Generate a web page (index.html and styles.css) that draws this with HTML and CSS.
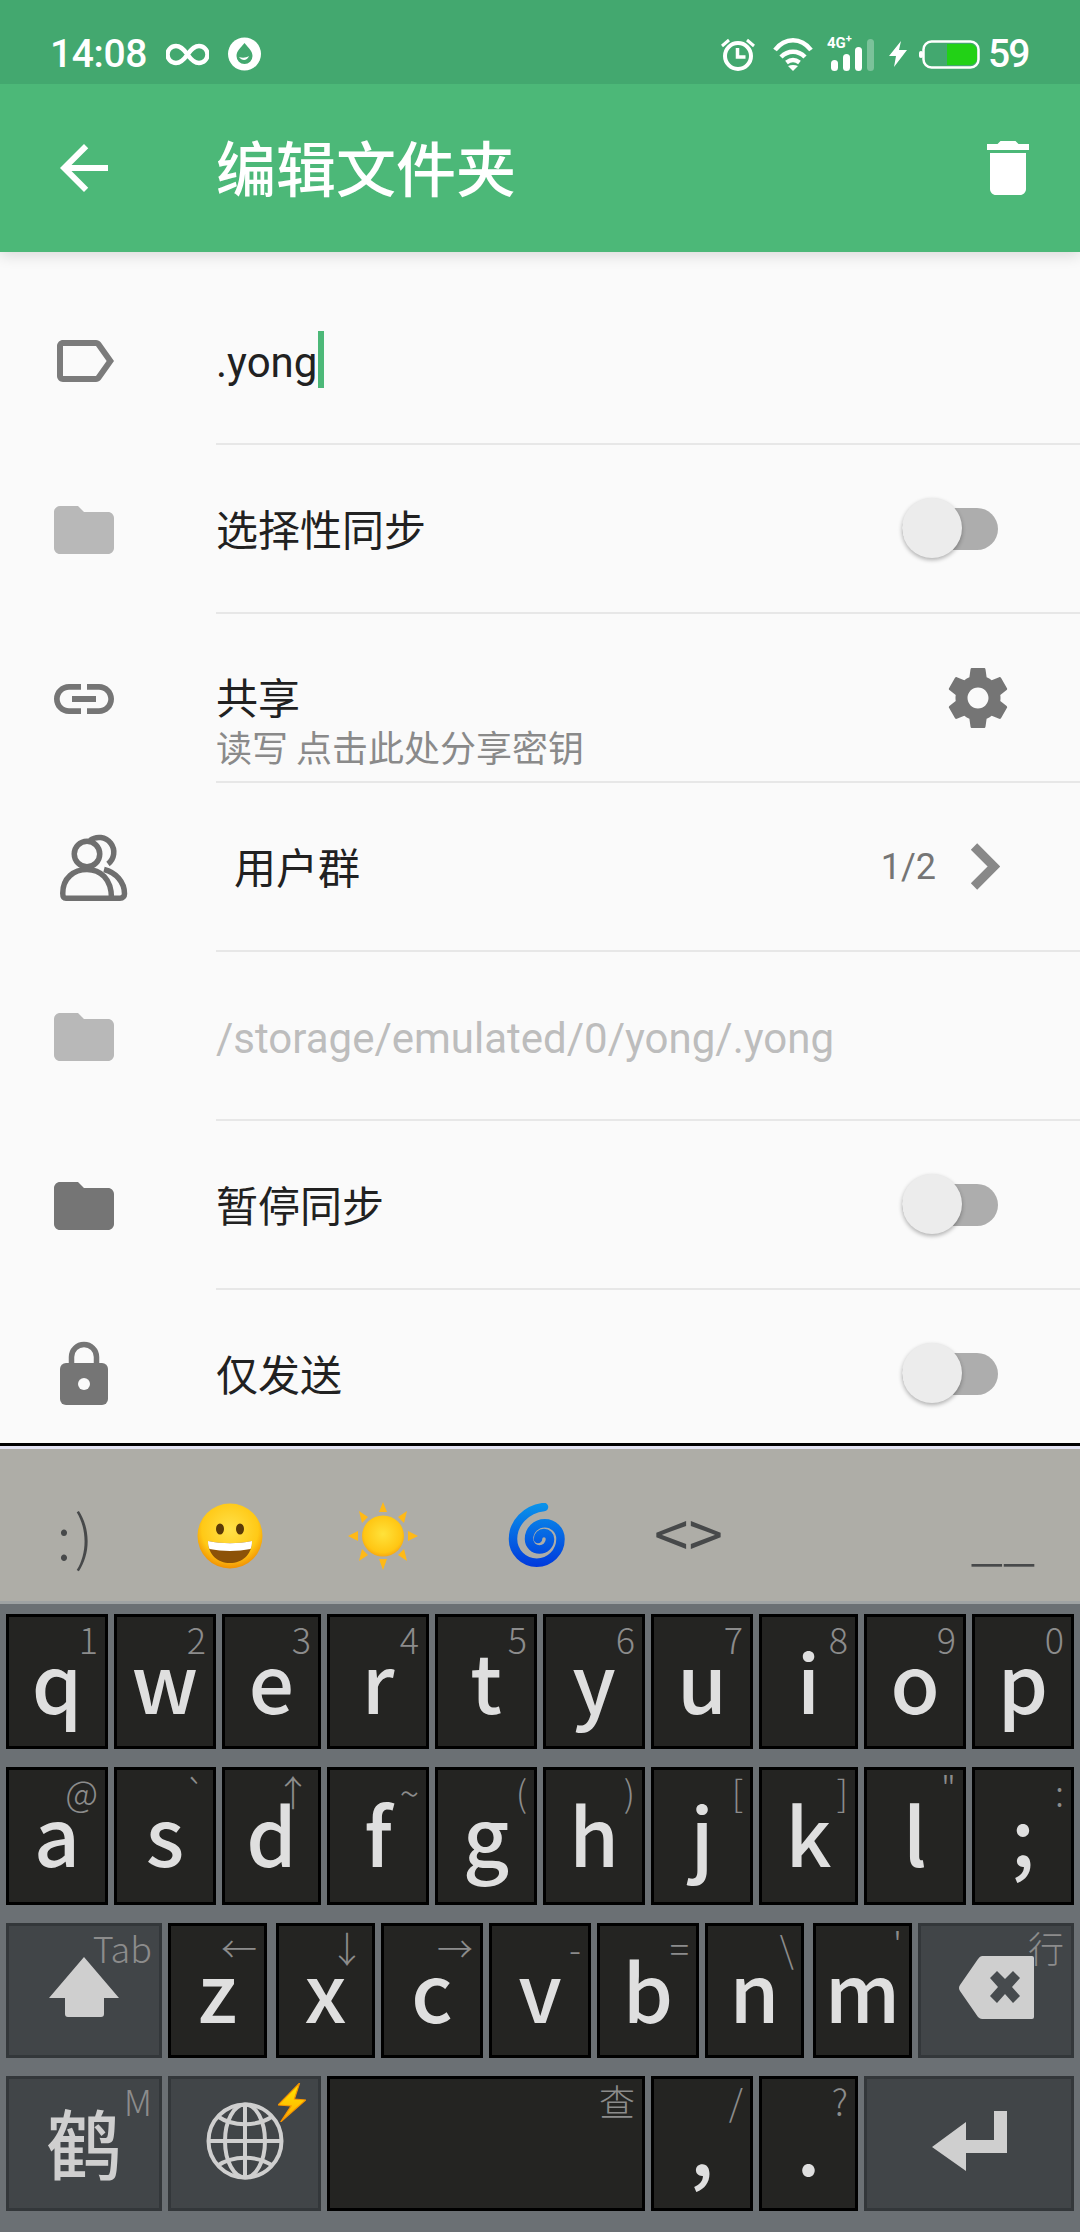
FILE: index.html
```html
<!DOCTYPE html>
<html lang="zh">
<head>
<meta charset="utf-8">
<title>编辑文件夹</title>
<link rel="stylesheet" href="styles.css">
</head>
<body>
<div class="screen">
  <header class="top">
    <div class="status">
      <span class="clock time">14:08</span>
      <svg class="s-inf" width="43" height="23" viewBox="0 0 43 23"><path d="M21.5 11.5C17 5 13 3 10 3a8.5 8.5 0 0 0 0 17c3 0 7-2 11.5-8.500C26 5 30 3 33 3a8.500 8.500 0 0 1 0 17c-3 0-7-2-11.500-8.500z" fill="none" stroke="#fff" stroke-width="4.500"/></svg>
      <svg class="s-ring" width="33" height="34" viewBox="0 0 33 34"><circle cx="16.500" cy="17" r="16.500" fill="#fff"/><path d="M16.500 6c4 5 8 8 8 13a8 8 0 0 1-16 0c0-5 4-8 8-13z" fill="#43a86f"/><path d="M11 20c3 4 8 4 10-1-3 2-7 2-10 1z" fill="#fff"/></svg>
      <div class="status-right">
        <svg width="34" height="34" viewBox="0 0 34 34"><circle cx="17" cy="19" r="13" fill="none" stroke="#fff" stroke-width="4"/><path d="M16.500 11v9h8" fill="none" stroke="#fff" stroke-width="3.500"/><path d="M1 9l7-6M33 9l-7-6" stroke="#fff" stroke-width="3"/></svg>
        <svg class="ml18" width="40" height="34" viewBox="0 0 40 34"><g fill="none" stroke="#fff" stroke-width="4.500"><path d="M2 13C12 0 28 0 38 13"/><path d="M8 20c7-7 17-7 24 0"/><path d="M13.500 25.500c4-3 9-3 13 0"/></g><path d="M15 29c3-1.500 7-1.500 10 0l-5 5z" fill="#fff"/></svg>
        <div class="net ml14">
          <span class="net-label">4G<sup>+</sup></span>
          <i class="bar b1"></i><i class="bar b2"></i><i class="bar b3"></i><i class="bar b4"></i>
        </div>
        <svg class="ml15" width="18" height="26" viewBox="0 0 18 26"><path d="M12 0L0 15h7L5 26 18 9h-8z" fill="#fff"/></svg>
        <svg class="ml12" width="61" height="29" viewBox="0 0 61 29"><rect x="0" y="11" width="4" height="7" rx="2" fill="#fff"/><rect x="4.500" y="1.500" width="55" height="26" rx="8" fill="none" stroke="#fff" stroke-width="2.500"/><path d="M28 4h23a7 7 0 0 1 7 7v7a7 7 0 0 1-7 7H28z" fill="#22d116"/></svg>
        <span class="clock level ml8">59</span>
      </div>
    </div>
    <div class="appbar">
      <svg class="ico" viewBox="0 0 24 24"><path d="M20 11H7.830l5.590-5.590L12 4l-8 8 8 8 1.410-1.410L7.830 13H20v-2z" fill="#fff"/></svg>
      <h1 class="title">编辑文件夹</h1>
      <svg class="ico trash" viewBox="0 0 24 24"><path d="M6 19c0 1.100.9 2 2 2h8c1.100 0 2-.9 2-2V7H6v12zM19 4h-3.500l-1-1h-5l-1 1H5v2h14V4z" fill="#fff"/></svg>
    </div>
  </header>

  <main class="list">
    <div class="row">
      <svg class="ico lead" viewBox="0 0 24 24"><path d="M17.630 5.840C17.270 5.330 16.670 5 16 5L5 5.010C3.900 5.010 3 5.900 3 7v10c0 1.100.9 1.990 2 1.990L16 19c.67 0 1.270-.33 1.630-.84L22 12l-4.370-6.160zM16 17H5V7h11l3.550 5L16 17z" fill="#7b7b7b"/></svg>
      <div class="cell"><span class="latin">.yong</span><i class="caret"></i></div>
    </div>
    <div class="row">
      <svg class="ico lead" viewBox="0 0 24 24"><path class="f-light" d="M10 4H4c-1.100 0-2 .9-2 2v12c0 1.100.9 2 2 2h16c1.100 0 2-.9 2-2V8c0-1.100-.9-2-2-2h-8l-2-2z"/></svg>
      <div class="cell"><span>选择性同步</span><div class="switch"><i class="thumb"></i></div></div>
    </div>
    <div class="row">
      <svg class="ico lead" viewBox="0 0 24 24"><path d="M3.900 12c0-1.710 1.390-3.100 3.100-3.100h4V7H7c-2.760 0-5 2.240-5 5s2.240 5 5 5h4v-1.900H7c-1.710 0-3.100-1.390-3.100-3.100zM8 13h8v-2H8v2zm9-6h-4v1.900h4c1.710 0 3.100 1.390 3.100 3.100s-1.390 3.100-3.100 3.100h-4V17h4c2.760 0 5-2.240 5-5s-2.240-5-5-5z" fill="#757575"/></svg>
      <div class="cell">
        <div class="stack"><span class="st-title">共享</span><span class="st-sub">读写 点击此处分享密钥</span></div>
        <svg class="ico gear" viewBox="0 0 24 24"><path d="M19.430 12.980c.04-.32.07-.64.07-.98s-.03-.66-.07-.98l2.110-1.650c.19-.15.24-.42.12-.64l-2-3.460c-.12-.22-.39-.3-.61-.22l-2.490 1c-.52-.4-1.080-.73-1.690-.98l-.38-2.650C14.460 2.180 14.250 2 14 2h-4c-.25 0-.46.18-.49.42l-.38 2.650c-.61.25-1.170.59-1.690.98l-2.490-1c-.23-.09-.49 0-.61.22l-2 3.460c-.13.22-.07.49.12.64l2.110 1.650c-.04.32-.07.65-.07.98s.03.66.07.98l-2.110 1.650c-.19.15-.24.42-.12.64l2 3.460c.12.22.39.3.61.22l2.490-1c.52.4 1.080.73 1.690.98l.38 2.650c.03.24.24.42.49.42h4c.25 0 .46-.18.49-.42l.38-2.650c.61-.25 1.170-.59 1.690-.98l2.490 1c.23.09.49 0 .61-.22l2-3.460c.12-.22.07-.49-.12-.64l-2.110-1.650zM12 15.500c-1.930 0-3.500-1.570-3.500-3.500s1.570-3.500 3.500-3.500 3.500 1.570 3.500 3.500-1.570 3.500-3.500 3.500z" fill="#757575"/></svg>
      </div>
    </div>
    <div class="row">
      <svg class="ico lead users" viewBox="0 0 72 72"><g fill="none" stroke="#6f6f6f" stroke-width="5.500"><circle cx="39" cy="22" r="12.750"/><path d="M42 8.500A14.500 14.500 0 0 1 60 32"/><path d="M18 66.250c-2.500 0-3.250-2-3.250-5C14.750 46 26 37.500 39 37.500s24.500 9 24.500 28.750"/><path d="M18 66.250h54c3 0 4.500-2 4.500-4.500C76.500 50 68 40.500 56 37.500"/></g></svg>
      <div class="cell"><span class="indent">用户群</span><span class="count">1/2</span><svg class="chev" width="30" height="47" viewBox="0 0 30 47"><path d="M4 3.500L24 23.500 4 43.500" fill="none" stroke="#888" stroke-width="9"/></svg></div>
    </div>
    <div class="row">
      <svg class="ico lead" viewBox="0 0 24 24"><path class="f-light" d="M10 4H4c-1.100 0-2 .9-2 2v12c0 1.100.9 2 2 2h16c1.100 0 2-.9 2-2V8c0-1.100-.9-2-2-2h-8l-2-2z"/></svg>
      <div class="cell"><span class="latin muted">/storage/emulated/0/yong/.yong</span></div>
    </div>
    <div class="row">
      <svg class="ico lead" viewBox="0 0 24 24"><path d="M10 4H4c-1.100 0-2 .9-2 2v12c0 1.100.9 2 2 2h16c1.100 0 2-.9 2-2V8c0-1.100-.9-2-2-2h-8l-2-2z" fill="#757575"/></svg>
      <div class="cell"><span>暂停同步</span><div class="switch"><i class="thumb"></i></div></div>
    </div>
    <div class="row">
      <svg class="ico lead" viewBox="0 0 72 72"><path d="M23.500 24v-6a12.500 12.500 0 0 1 25 0v6" fill="none" stroke="#757575" stroke-width="5.500"/><rect x="12" y="24" width="48" height="42" rx="6" fill="#757575"/><circle cx="36" cy="45" r="6" fill="#fafafa"/></svg>
      <div class="cell"><span>仅发送</span><div class="switch"><i class="thumb"></i></div></div>
    </div>
  </main>

  <section class="ime">
    <div class="cands">
      <span class="cand smile">:)</span>
      <span class="cand">
        <svg width="66" height="66" viewBox="0 0 66 66"><defs><radialGradient id="fc" cx=".5" cy=".4" r=".62"><stop offset="0" stop-color="#ffe14a"/><stop offset=".7" stop-color="#ffc916"/><stop offset="1" stop-color="#f08a00"/></radialGradient></defs><circle cx="33" cy="33" r="32.500" fill="url(#fc)"/><ellipse cx="23" cy="26" rx="4" ry="5.500" fill="#5b3a08"/><ellipse cx="43" cy="26" rx="4" ry="5.500" fill="#5b3a08"/><path d="M11 38c14 3 30 3 44 0 0 14-10 22-22 22S11 52 11 38z" fill="#8c5208"/><path d="M11 38c14 3 30 3 44 0 0 4-.5 6-1.500 8-13 2.500-28 2.500-41 0-1-2-1.500-4-1.500-8z" fill="#fff"/></svg>
      </span>
      <span class="cand">
        <svg width="70" height="68" viewBox="0 0 70 68"><defs><radialGradient id="sn" cx=".5" cy=".45" r=".6"><stop offset="0" stop-color="#ffe23a"/><stop offset=".75" stop-color="#ffc613"/><stop offset="1" stop-color="#f59a10"/></radialGradient></defs><g fill="#ffb917"><path d="M35 0l4 10h-8z"/><path d="M35 68l4-11h-8z"/><path d="M70 34l-10-5v10z"/><path d="M0 34l10-5v10z"/><path d="M59 9l-9 6 6 6z"/><path d="M11 9l9 6-6 6z"/><path d="M59 59l-9-6 6-6z"/><path d="M11 59l9-6-6-6z"/></g><ellipse cx="35" cy="34" rx="21" ry="20.500" fill="url(#sn)"/></svg>
      </span>
      <span class="cand">
        <svg width="60" height="66" viewBox="0 0 60 66"><defs><linearGradient id="cy" gradientUnits="userSpaceOnUse" x1="30" y1="0" x2="30" y2="66"><stop offset="0" stop-color="#0a94ea"/><stop offset="1" stop-color="#0036dc"/></linearGradient></defs><path d="M38 4C20 6 7 20 7 36A23.750 23.750 0 0 0 54.500 36A15.750 15.750 0 0 0 23 36A10.500 10.500 0 0 0 44 36A6 6 0 0 0 32 36" fill="none" stroke="url(#cy)" stroke-width="8.500" stroke-linecap="round"/></svg>
      </span>
      <span class="cand tag">&lt;&gt;</span>
      <span class="cand under">__</span>
    </div>
    <div class="cand-edge"></div>
    <div class="keys">
      <div class="krow">
        <div class="key w102"><span class="hint">1</span><span class="main">q</span></div>
        <div class="key w102"><span class="hint">2</span><span class="main">w</span></div>
        <div class="key w99"><span class="hint">3</span><span class="main">e</span></div>
        <div class="key w102"><span class="hint">4</span><span class="main">r</span></div>
        <div class="key w102"><span class="hint">5</span><span class="main">t</span></div>
        <div class="key w102"><span class="hint">6</span><span class="main">y</span></div>
        <div class="key w102"><span class="hint">7</span><span class="main">u</span></div>
        <div class="key w99"><span class="hint">8</span><span class="main">i</span></div>
        <div class="key w102"><span class="hint">9</span><span class="main">o</span></div>
        <div class="key w102"><span class="hint">0</span><span class="main">p</span></div>
      </div>
      <div class="krow tall">
        <div class="key w102"><span class="hint">@</span><span class="main">a</span></div>
        <div class="key w102"><span class="hint">`</span><span class="main">s</span></div>
        <div class="key w99"><span class="hint">↑</span><span class="main">d</span></div>
        <div class="key w102"><span class="hint">~</span><span class="main">f</span></div>
        <div class="key w102"><span class="hint">(</span><span class="main">g</span></div>
        <div class="key w102"><span class="hint">)</span><span class="main">h</span></div>
        <div class="key w102"><span class="hint">[</span><span class="main">j</span></div>
        <div class="key w99"><span class="hint">]</span><span class="main">k</span></div>
        <div class="key w102"><span class="hint">"</span><span class="main">l</span></div>
        <div class="key w102"><span class="hint">:</span><span class="main">;</span></div>
      </div>
      <div class="krow">
        <div class="key fn w156"><span class="hint">Tab</span>
          <svg class="glyph" width="70" height="61" viewBox="0 0 70 61"><path d="M35 0L70 41H55v16q0 3-3 3H19q-3 0-3-3V41H0z" fill="#cfcfcf"/></svg>
        </div>
        <div class="key w99"><span class="hint">←</span><span class="main">z</span></div>
        <div class="key w99 wide-gap"><span class="hint">↓</span><span class="main">x</span></div>
        <div class="key w102"><span class="hint">→</span><span class="main">c</span></div>
        <div class="key w102"><span class="hint">-</span><span class="main">v</span></div>
        <div class="key w102"><span class="hint">=</span><span class="main">b</span></div>
        <div class="key w99"><span class="hint">\</span><span class="main">n</span></div>
        <div class="key w99 wide-gap"><span class="hint">'</span><span class="main">m</span></div>
        <div class="key fn w156">
          <svg class="glyph" width="75" height="63" viewBox="0 0 75 63"><path d="M23 0h50q2 0 2 2v59q0 2-2 2H23q-2 0-4-2L1 35q-2-3 0-6L19 3q2-3 4-3z" fill="#cfcfcf"/><path d="M35 20l7-7 8 8 8-8 7 7-8 9 8 9-7 7-8-9-8 9-7-7 8-9z" fill="#474b4e" transform="translate(-4 2)"/></svg>
          <span class="hint">行</span>
        </div>
      </div>
      <div class="krow">
        <div class="key fn w156"><span class="hint">M</span><span class="he">鹤</span></div>
        <div class="key fn w153">
          <svg class="glyph" width="78" height="78" viewBox="0 0 78 78"><g fill="none" stroke="#cfcfcf" stroke-width="4"><circle cx="39" cy="39" r="36.500"/><ellipse cx="39" cy="39" rx="20" ry="36.500"/><path d="M39 2v74M2.500 39h73"/><path d="M11 14c16 11 40 11 56 0M11 64c16-11 40-11 56 0"/></g></svg>
          <svg class="bolt" width="28" height="39" viewBox="0 0 28 39"><defs><linearGradient id="bt" x1="0" y1="0" x2="0" y2="1"><stop offset="0" stop-color="#ffe900"/><stop offset="1" stop-color="#ffa800"/></linearGradient></defs><path d="M21.600 0L0 22l13 1L2.600 39 27.800 17l-11.400-1z" fill="url(#bt)" stroke="#f59300" stroke-width="1.200"/></svg>
        </div>
        <div class="key w318"><span class="hint">查</span></div>
        <div class="key w102"><span class="hint">/</span><span class="main">,</span></div>
        <div class="key w99"><span class="hint">?</span><span class="main">.</span></div>
        <div class="key fn w210">
          <svg class="glyph" width="75" height="60" viewBox="0 0 75 60"><path d="M62 0h13v42H34v18L0 36 34 11v18h28z" fill="#cfcfcf"/></svg>
        </div>
      </div>
    </div>
  </section>
</div>
</body>
</html>
```

FILE: styles.css
```css
* { box-sizing: border-box; }
html, body { margin: 0; padding: 0; }
body { font-family: "Noto Sans CJK SC", sans-serif; background: #fafafa; }
svg { display: block; flex: none; }
i { display: block; }

.screen { width: 1080px; height: 2232px; display: flex; flex-direction: column; overflow: hidden; }

.top { position: relative; z-index: 2; box-shadow: 0 3px 14px rgba(0,0,0,.14); flex: none; }
.status { height: 84px; padding: 24px 52px 0 50px; background: #43a86f; display: flex; align-items: center; color: #fff; }
.clock { font: 500 39px/1 Roboto, sans-serif; }
.time { letter-spacing: -.4px; }
.level { letter-spacing: -2px; width: 40px; }
.s-inf { margin-left: 19px; }
.s-ring { margin-left: 19px; }
.status-right { margin-left: auto; display: flex; align-items: center; }
.ml8 { margin-left: 8px; }
.ml12 { margin-left: 12px; }
.ml14 { margin-left: 14px; }
.ml15 { margin-left: 15px; }
.ml18 { margin-left: 18px; }
.net { width: 47px; height: 34px; position: relative; display: flex; align-items: flex-end; gap: 5px; padding-left: 4px; }
.net-label { position: absolute; left: 0; top: -1px; font: 700 15px/15px Roboto, sans-serif; color: #fff; }
.net-label sup { font-size: 11px; line-height: 0; }
.bar { width: 7px; background: #fff; border-radius: 4px; }
.b1 { height: 11px; }
.b2 { height: 17px; }
.b3 { height: 24px; }
.b4 { height: 32px; opacity: .3; }

.appbar { height: 168px; background: #4cb878; padding: 0 36px 0 48px; display: flex; align-items: center; }
.ico { width: 72px; height: 72px; }
.title { margin: 0 0 4px 96px; font-size: 60px; line-height: 1; font-weight: 500; color: #fff; }
.trash { margin-left: auto; }

.list { flex: 1; min-height: 0; overflow: hidden; padding-top: 24px; background: #fafafa; }
.row { height: 169px; display: flex; align-items: center; padding-left: 48px; font-size: 42px; color: #212121; }
.lead { margin-right: 96px; }
.users { overflow: visible; }
.cell { flex: 1; align-self: stretch; display: flex; align-items: center; padding-right: 66px; border-bottom: 2px solid #e7e7e7; }
.cell > span { margin-bottom: 2px; }
.cell > .latin { font-family: Roboto, sans-serif; margin: 5px 0 0; }
.muted { color: #bdbdbd; }
.f-light { fill: #b8b8b8; }
.caret { width: 6px; height: 57px; margin-left: 1px; background: #4cb878; }

.switch { position: relative; margin-left: auto; margin-right: 16px; width: 96px; height: 42px; border-radius: 21px; background: #adadad; }
.thumb { position: absolute; left: 0; top: -10px; width: 60px; height: 60px; border-radius: 50%; background: #ececec; box-shadow: 0 2px 4px rgba(0,0,0,.3); }

.stack { display: flex; flex-direction: column; padding-top: 41px; }
.st-title { font-size: 42px; line-height: 50px; }
.st-sub { font-size: 36px; line-height: 40px; margin-top: 5px; color: #8a8a8a; }
.gear { margin-left: auto; }
.indent { margin-left: 18px; }
.cell > .count { margin: 0 0 0 auto; font: 36px/1 Roboto, sans-serif; color: #757575; }
.chev { margin-left: 34px; margin-right: 14px; }

.ime { flex: none; height: 789px; border-top: 3px solid #000; background: #6b7074; }
.cands { height: 155px; padding-top: 22px; border-top: 3px solid #e2e2f2; background: #aeada7; display: flex; align-items: center; }
.cand { flex: none; width: 153px; display: flex; justify-content: center; align-items: center; color: #47494a; line-height: 1; }
.smile { font-size: 60px; font-weight: 300; letter-spacing: 3px; margin-bottom: 4px; }
.tag { font-size: 62px; margin-bottom: 10px; }
.under { margin-left: auto; margin-bottom: 5px; width: 154px; font-size: 58px; font-weight: 300; }
.cand-edge { height: 3px; background: #9ea2a3; }

.keys { padding: 10px 6px 0; display: flex; flex-direction: column; gap: 18px; }
.krow { display: flex; gap: 6px; height: 135px; }
.tall { height: 138px; }
.key { position: relative; height: 100%; flex: none; border: 3px solid #000; background: #242422; display: flex; justify-content: center; align-items: flex-start; }
.fn { background: #414548; border-color: #33373a; align-items: center; }
.w99 { width: 99px; }
.w102 { width: 102px; }
.w153 { width: 153px; }
.w156 { width: 156px; }
.w210 { width: 210px; }
.w318 { width: 318px; }
.wide-gap { margin-left: 3px; }

.main { font-size: 80px; line-height: 100px; margin-top: 12px; font-weight: 500; color: #dfdfdf; }
.hint { position: absolute; top: 4px; right: 7px; font-size: 36px; line-height: 34px; font-weight: 300; color: #8c8c8c; }
.he { font-size: 76px; line-height: 1; font-weight: 500; color: #cfcfcf; margin-top: -6px; }
.glyph { margin-top: -6px; }
.bolt { position: absolute; left: 107px; top: 4px; }
```
